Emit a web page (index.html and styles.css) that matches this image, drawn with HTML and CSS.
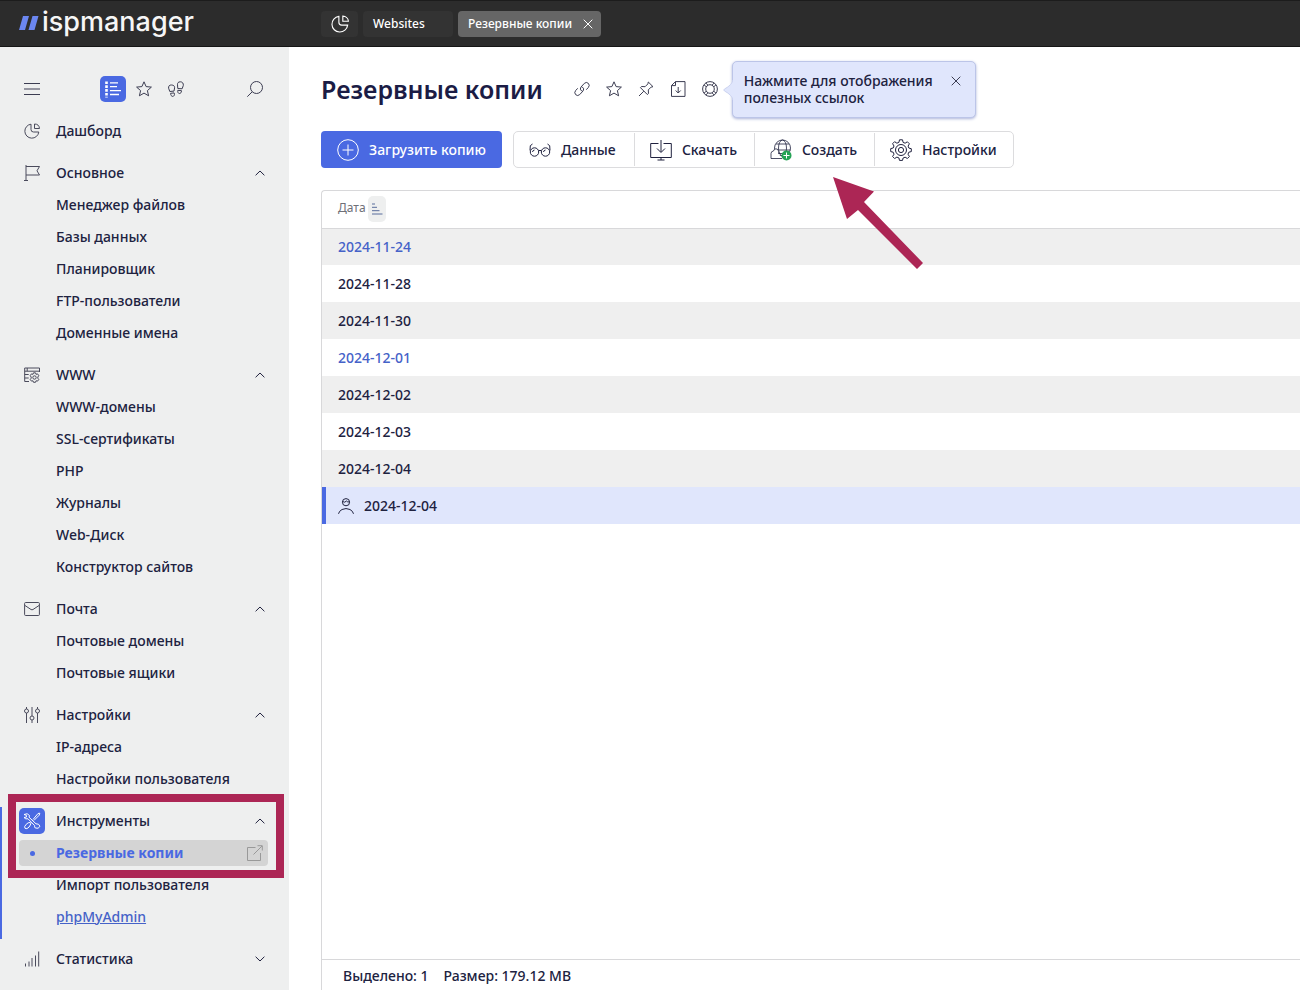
FILE: index.html
```
<!DOCTYPE html>
<html lang="ru">
<head>
<meta charset="utf-8">
<meta name="viewport" content="width=device-width, initial-scale=1">
<title>Резервные копии — ispmanager</title>
<link rel="stylesheet" href="styles.css">
</head>
<body>
<svg class="sprite" aria-hidden="true">
  <symbol id="pie" viewBox="0 0 16 16"><path d="M7 1.2A7 7 0 1 0 14.8 9H9.500Q7 9 7 6.500Z"/><path d="M10.500 1v4.500h5A5 5 0 0 0 10.500 1z"/></symbol>
  <symbol id="star" viewBox="0 0 16 16"><path d="M8 .8l2.100 4.800 5.300.5-4 3.500 1.200 5.200L8 12.100l-4.600 2.700 1.200-5.200-4-3.500 5.300-.5z"/></symbol>
  <symbol id="up" viewBox="0 0 10 6"><path d="M.6 5.300L5 1l4.400 4.300"/></symbol>
  <symbol id="down" viewBox="0 0 10 6"><path d="M.6.7L5 5 9.400.7"/></symbol>
  <symbol id="cross" viewBox="0 0 10 10"><path d="M.7.7l8.600 8.600M9.300.7L.7 9.300"/></symbol>
</svg>
<header class="topbar">
  <a class="logo" href="#" aria-label="ispmanager">
    <svg class="logo-mark" viewBox="0 0 20 14"><path d="M4 0H10L6 14H0zM13.500 0H19.500l-4 14H9.500z"/></svg>
    <span>ispmanager</span>
  </a>
  <nav class="tabs" aria-label="Вкладки">
    <button class="tab tab-icon" aria-label="Дашборд"><svg class="icon s18"><use href="#pie"/></svg></button>
    <button class="tab tab-site">Websites</button>
    <button class="tab tab-active">Резервные копии <svg class="icon s10"><use href="#cross"/></svg></button>
  </nav>
</header>
<div class="shell">
  <aside class="sidebar">
    <div class="side-tools">
      <button class="bare" aria-label="Меню"><svg class="icon s16" viewBox="0 0 16 16"><path d="M0 2.500h16M0 8h16M0 13.500h16"/></svg></button>
      <div class="side-modes">
        <button class="bare mode-on" aria-label="Список"><svg class="icon s18" viewBox="0 0 18 18"><path stroke-width="2.600" stroke-dasharray="2.600 1.200" d="M2.500 1.500v16"/><path stroke-width="1.300" d="M6 2.800h8M6 6.600h7M6 10.600h11M6 14.500h9"/></svg></button>
        <button class="bare" aria-label="Избранное"><svg class="icon s16"><use href="#star"/></svg></button>
        <button class="bare" aria-label="История"><svg class="icon s16" viewBox="0 0 16 16"><path d="M3.600 4C1.400 3.800.3 5.200.6 7.200l1.200 3.300 4.200-.4.600-3.300C6.800 5 5.400 4.100 3.600 4zM2.600 12.300l3.500-.4c1 2-.2 3.500-1.400 3.500S2.700 14.300 2.600 12.300zM12.300.8c-2.200 0-3 1.400-2.800 3l.3 3.700 4.300.3 1.200-3.300c.3-2-.8-3.700-3-3.700zM9.800 9.300l3.700.4c0 1.800-.9 2.800-2.100 2.800-1.100 0-1.900-1.200-1.600-3.200z"/></svg></button>
      </div>
      <button class="bare" aria-label="Поиск"><svg class="icon s16" viewBox="0 0 16 16"><circle cx="9.500" cy="6.500" r="6"/><path d="M5.200 10.800L.3 15.700"/></svg></button>
    </div>
    <nav class="menu" aria-label="Разделы">
      <section><a class="head" href="#"><svg class="icon s16"><use href="#pie"/></svg><span>Дашборд</span></a></section>
      <section>
        <button class="head"><svg class="icon s16" viewBox="0 0 16 16"><path d="M2 0v15.500M0 15.500h4M2 1.500h13.500L13 5.800l2.500 4.200H2"/></svg><span>Основное</span><svg class="icon chev"><use href="#up"/></svg></button>
        <a class="item" href="#">Менеджер файлов</a>
        <a class="item" href="#">Базы данных</a>
        <a class="item" href="#">Планировщик</a>
        <a class="item" href="#">FTP-пользователи</a>
        <a class="item" href="#">Доменные имена</a>
      </section>
      <section>
        <button class="head"><svg class="icon s16" viewBox="0 0 16 16"><path d="M15.500 5V1H.7v13.500H5M.7 4.200h14.800M.7 7.500h4M.7 11h4M3.200 1v3.200"/><circle cx="10.500" cy="10.500" r="1.700"/><path d="M9.500 5.800h2l.5 1.500 1.600-.4 1.200 1.800-1 1.300v1.200l1 1.200-1.200 1.700-1.600-.3-.5 1.500h-2L9 13.800l-1.600.3-1.200-1.700 1-1.200V10l-1-1.300 1.200-1.800 1.600.4z"/></svg><span>WWW</span><svg class="icon chev"><use href="#up"/></svg></button>
        <a class="item" href="#">WWW-домены</a>
        <a class="item" href="#">SSL-сертификаты</a>
        <a class="item" href="#">PHP</a>
        <a class="item" href="#">Журналы</a>
        <a class="item" href="#">Web-Диск</a>
        <a class="item" href="#">Конструктор сайтов</a>
      </section>
      <section>
        <button class="head"><svg class="icon s16" viewBox="0 0 16 16"><rect x=".6" y="1.500" width="14.800" height="13" rx="1"/><path d="M1 4.500l6 4q1 .6 2 0l6-4"/></svg><span>Почта</span><svg class="icon chev"><use href="#up"/></svg></button>
        <a class="item" href="#">Почтовые домены</a>
        <a class="item" href="#">Почтовые ящики</a>
      </section>
      <section>
        <button class="head"><svg class="icon s16" viewBox="0 0 16 16"><circle cx="2.500" cy="4" r="2"/><circle cx="8" cy="11" r="2"/><circle cx="13.500" cy="4" r="2"/><path d="M2.500 0v2M2.500 6v10M8 0v9M8 13v3M13.500 0v2M13.500 6v10"/></svg><span>Настройки</span><svg class="icon chev"><use href="#up"/></svg></button>
        <a class="item" href="#">IP-адреса</a>
        <a class="item" href="#">Настройки пользователя</a>
      </section>
      <section class="current">
        <button class="head"><span class="badge"><svg class="icon s18" viewBox="0 0 18 18"><path d="M1 2.500Q4.500.5 6.500 3.500L6 5.200l7 6.600q3-.4 4 2.500-1.500 3-4.700 1.700-1-1-.7-2.500L5 6.800Q2.500 7.500 1 5.500l2.400-.4V3.300z"/><path d="M16.800 1.200L15 1.500l-5 6M16.800 1.200l-.6 2-5.200 5.200M7.200 10.500q-2-.3-4 1.800-2.500 2.500-1.200 4 1.800 1.300 4-1.200 1.800-2.300 1.800-3.900z"/></svg></span><span>Инструменты</span><svg class="icon chev"><use href="#up"/></svg></button>
        <a class="item selected" href="#">Резервные копии <svg class="icon s16" viewBox="0 0 16 16"><path d="M8.500 2.500h-8v13h13V8M6.500 9.500L15 1M10.500.7h4.800v4.800"/></svg></a>
        <a class="item" href="#">Импорт пользователя</a>
        <a class="item link" href="#">phpMyAdmin</a>
        <div class="frame"></div>
      </section>
      <section>
        <button class="head"><svg class="icon s16" viewBox="0 0 16 16"><path d="M1.500 12.500v3M5 10.500v5M8 7v8.500M11.500 4.500v11M14.700.5v15"/></svg><span>Статистика</span><svg class="icon chev"><use href="#down"/></svg></button>
      </section>
    </nav>
  </aside>
  <main class="content">
    <div class="title-row">
      <h1>Резервные копии</h1>
      <div class="title-icons">
        <button class="bare" aria-label="Ссылка"><svg class="icon s16" viewBox="0 0 16 16"><path d="M7.800 10.200Q5.200 8.200 7 6l3.300-3.600q2-1.900 4-.1 1.900 2 .1 4.100L12.300 8.700M8.200 5.800Q10.800 7.800 9 10l-3.300 3.600q-2 1.900-4 .1-1.900-2-.1-4.100L3.700 7.300"/></svg></button>
        <button class="bare" aria-label="В избранное"><svg class="icon s16"><use href="#star"/></svg></button>
        <button class="bare" aria-label="Закрепить"><svg class="icon s16" viewBox="0 0 16 16"><path d="M10.300 1l4.700 4.700-1.900.4-2.800 2.800.2 3.600-1.200 1L2.500 6.700l1-1.200 3.600.2 2.800-2.800zM5.800 10.200L1 15"/></svg></button>
        <button class="bare" aria-label="Сохранить"><svg class="icon s16" viewBox="0 0 16 16"><path d="M5.500.6H15v14.800H1.500V4.500zM5.500.6v4h-4M8.200 6v6M5.700 9.500l2.500 2.500 2.500-2.500"/></svg></button>
        <button class="bare help" aria-label="Помощь"><svg class="icon s16" viewBox="0 0 16 16"><circle cx="8" cy="8" r="7.400"/><circle cx="8" cy="8" r="4.300"/><path d="M2 3.800l2.300 2M3.800 2L6 4.200M12.200 2L10 4.200M14 3.800l-2.200 2M2 12.200l2.300-2M3.800 14L6 11.800M12.200 14L10 11.800M14 12.200l-2.200-2"/></svg></button>
        <div class="hint" role="status">
          <svg class="hint-tip" viewBox="0 0 10 20"><path d="M10 0Q9 5 1.500 9q-1.500 1 0 2Q9 15 10 20"/></svg>
          <p>Нажмите для отображения полезных ссылок</p>
          <button class="bare" aria-label="Закрыть"><svg class="icon s10"><use href="#cross"/></svg></button>
        </div>
      </div>
    </div>
    <div class="toolbar">
      <button class="primary"><svg class="icon s22" viewBox="0 0 22 22"><circle cx="11" cy="11" r="10.300"/><path d="M11 5.500v11M5.500 11h11"/></svg>Загрузить копию</button>
      <div class="group">
        <button><svg class="icon s22" viewBox="0 0 22 22"><circle cx="5.500" cy="13" r="4.200"/><circle cx="16.500" cy="13" r="4.200"/><path d="M9.500 12q1.500-1.500 3 0M1 11.500l.3-4.800L3.500 5M21 11.500l-.3-4.800L18.500 5M3.500 13q.2-1.800 2-2M14.500 13q.2-1.800 2-2"/></svg>Данные</button>
        <button><svg class="icon s22" viewBox="0 0 22 22"><path d="M8.500 4.500H.7v14h20.600v-14h-7.800M11 1v12M7 9.500l4 4 4-4M11 18.500V21M7.500 21h7"/></svg>Скачать</button>
        <button><svg class="icon s22" viewBox="0 0 22 22"><g class="thin"><circle cx="12.500" cy="9" r="8"/><ellipse cx="12.500" cy="9" rx="4" ry="8"/><path d="M6 5h13M4.500 11h16M6 14.500h13"/><path class="cloud" d="M12 19.500H1V14.500q0-2.200 2.500-2.500Q4 9.800 6 9.800q2.500 0 2.700 3v2.200"/></g><circle class="plus" cx="16.500" cy="16.500" r="5"/><path class="plus-sign" d="M16.500 13.500v6M13.500 16.500h6"/></svg>Создать</button>
        <button><svg class="icon s22" viewBox="0 0 22 22"><path d="M9.500.8h3l.6 2.600 2 .8 2.300-1.400 2 2-1.300 2.300.8 2 2.400.6v2.900l-2.500.6-.8 2 1.400 2.300-2 2-2.300-1.300-2 .8-.6 2.400h-3l-.6-2.500-2-.8-2.300 1.400-2-2 1.400-2.300-.8-2-2.500-.6V9.600L3.200 9l.8-2-1.400-2.300 2-2L6.900 4.200l2-.8z"/><circle cx="11" cy="11" r="5.500"/><circle cx="11" cy="11" r="2.600"/></svg>Настройки</button>
      </div>
    </div>
    <div class="panel">
      <table>
        <thead><tr><th scope="col">Дата<button class="sort" aria-label="Сортировка"><svg class="icon" viewBox="0 0 12 12"><path d="M1 1h3M1 4.300h5M1 7.700h7.500M1 11h10.500"/></svg></button></th></tr></thead>
        <tbody>
          <tr><td class="full">2024-11-24</td></tr>
          <tr><td>2024-11-28</td></tr>
          <tr><td>2024-11-30</td></tr>
          <tr><td class="full">2024-12-01</td></tr>
          <tr><td>2024-12-02</td></tr>
          <tr><td>2024-12-03</td></tr>
          <tr><td>2024-12-04</td></tr>
          <tr class="chosen"><td><span class="with-icon"><svg class="icon s16" viewBox="0 0 16 16"><circle cx="8" cy="4.200" r="3.600"/><path d="M4.600 3.600q2.400 1.500 3.800-.6 1.200 1.400 3 .9M.5 15.800q.6-2.800 3.500-4.300 4-1.900 8 0 2.900 1.500 3.500 4.300"/></svg>2024-12-04</span></td></tr>
        </tbody>
      </table>
      <footer class="summary"><span>Выделено: 1</span><span>Размер: 179.12 MB</span></footer>
    </div>
    <svg class="arrow" viewBox="0 0 90 92" aria-hidden="true"><path d="M0 0L41 14.500 31 25 90 86l-6 6L25 33 14 42z"/></svg>
  </main>
</div>
</body>
</html>
```
FILE: styles.css
```
* { box-sizing: border-box; }
body {
  margin: 0;
  min-height: 100vh;
  display: flex;
  flex-direction: column;
  font: 500 14px/20px "Noto Sans", "Open Sans", sans-serif;
  color: #20223f;
  background: #fff;
}
button { font: inherit; color: inherit; background: none; border: 0; padding: 0; }
a { color: inherit; text-decoration: none; }
.sprite { position: absolute; width: 0; height: 0; }
.icon { flex: none; fill: none; stroke: currentColor; stroke-width: 1; display: block; }
.s10 { width: 10px; height: 10px; }
.s16 { width: 16px; height: 16px; }
.s18 { width: 18px; height: 18px; }
.s22 { width: 22px; height: 22px; }
.bare { display: flex; color: #3c3d52; }

.topbar {
  height: 47px;
  display: flex;
  align-items: center;
  background: #2c2c2c;
  border-top: 1px solid #1c1c1c;
  border-bottom: 1px solid #161616;
  color: #fff;
}
.logo { display: flex; align-items: center; gap: 3px; width: 321px; padding: 0 0 4px 19px; font: 500 27px/36px Inter, Lato, sans-serif; color: #f6f6f6; }
.logo-mark { width: 20px; height: 14px; margin-top: 3px; fill: #6b86f0; }
.tabs { display: flex; gap: 5px; font-size: 12px; }
.tab { display: flex; align-items: center; height: 26px; padding: 0 10px; border-radius: 4px; background: #333; }
.tab-icon { width: 37px; }
.tab-site { width: 90px; }
.tab-active { width: 143px; justify-content: space-between; padding-right: 8px; background: #666; }

.shell { flex: 1; display: flex; }
.sidebar { flex: none; width: 289px; padding-top: 26px; background: #eeefef; }
.side-tools { display: flex; align-items: center; justify-content: space-between; height: 32px; padding: 0 26px 0 24px; }
.side-modes { display: flex; align-items: center; gap: 16px; margin-left: -4px; }
.side-modes .mode-on { width: 26px; height: 26px; margin-right: -6px; border-radius: 5px; align-items: center; justify-content: center; background: #4a69e2; color: #fff; }
.menu { display: flex; flex-direction: column; gap: 10px; padding-top: 10px; }
.head { display: flex; align-items: center; width: 100%; height: 32px; padding: 0 24px; gap: 16px; text-align: left; }
.head > .icon { color: #4a4b5c; }
.head .chev { width: 10px; height: 6px; margin-left: auto; color: #20223f; }
.item { display: flex; align-items: center; height: 32px; padding-left: 56px; }
.current { position: relative; }
.current::before { content: ""; position: absolute; left: 0; top: 2px; bottom: -6px; width: 2px; background: #4a69e2; }
.badge { display: flex; align-items: center; justify-content: center; width: 26px; height: 26px; margin: 0 -5px; border-radius: 5px; background: #4a69e2; color: #fff; }
.selected { position: relative; justify-content: space-between; height: 26px; margin: 3px 21px 3px 19px; padding: 0 5px 0 37px; border-radius: 4px; background: #d4d4d4; color: #4a69e2; font-weight: 700; }
.selected::before { content: ""; position: absolute; left: 11px; top: 11px; width: 5px; height: 5px; border-radius: 50%; background: #4a69e2; }
.selected .icon { color: #999; }
.link { color: #4562c8; text-decoration: underline; }
.frame { position: absolute; left: 8px; right: 5px; top: -11px; height: 84px; border: 8px solid #ac2655; }

.content { position: relative; flex: 1; min-width: 0; display: flex; flex-direction: column; padding: 22px 0 0 32px; }
.title-row { display: flex; align-items: center; gap: 31px; height: 40px; }
h1 { margin: 0; font-size: 25px; line-height: 38px; font-weight: 600; color: #1b1c45; }
.title-icons { position: relative; display: flex; align-items: center; gap: 16px; }
.hint {
  position: absolute;
  left: 158px;
  top: -20px;
  width: 244px;
  height: 57px;
  display: flex;
  justify-content: space-between;
  align-items: flex-start;
  padding: 10px 14px 11px 11px;
  border: 1px solid #bcc5e8;
  border-radius: 5px;
  background: #e0e6fc;
  box-shadow: 0 1px 3px #aab2d8;
}
.hint p { margin: 0; font-size: 14px; line-height: 17px; }
.hint .bare { padding-top: 4px; }
.hint-tip { position: absolute; left: -10px; top: 18px; width: 10px; height: 20px; fill: #e0e6fc; stroke: #ccd3f0; }

.toolbar { display: flex; gap: 11px; margin-top: 22px; }
.toolbar button { display: flex; align-items: center; gap: 10px; padding: 0 16px; white-space: nowrap; }
.toolbar .primary { height: 37px; border-radius: 4px; background: #4a69e2; color: #fff; font-weight: 500; }
.group { display: flex; align-items: center; height: 37px; border: 1px solid #dcdcde; border-radius: 5px; }
.group button { min-width: 120px; height: 33px; padding-left: 15px; }
.group button + button { border-left: 1px solid #dcdcde; }
.thin { stroke-width: .8; }
.cloud { fill: #fff; }
.plus { fill: #25a355; stroke: none; }
.plus-sign { stroke: #fff; }

.panel { flex: 1; display: flex; flex-direction: column; margin-top: 22px; border: 1px solid #d8d8da; border-width: 1px 0 0 1px; border-top-left-radius: 4px; }
table { width: 100%; border-collapse: collapse; }
th { height: 37px; padding: 0 16px; font-size: 12px; font-weight: 400; text-align: left; color: #6f7078; border-bottom: 1px solid #d8d8da; }
.sort { display: inline-flex; vertical-align: middle; align-items: center; justify-content: center; width: 18px; height: 26px; margin-left: 2px; border-radius: 5px; background: #eeefef; color: #596d9c; }
.sort .icon { width: 12px; height: 12px; }
td { height: 37px; padding: 0 16px; }
tbody tr:nth-child(odd) { background: #efefef; }
.full { color: #4562c8; }
tbody .chosen { background: #e0e6fc; box-shadow: inset 4px 0 #4a69e2; }
.with-icon { display: flex; align-items: center; gap: 10px; }
.summary { display: flex; gap: 15px; margin-top: auto; height: 31px; padding: 6px 21px 0; border-top: 1px solid #d8d8da; }
.arrow { position: absolute; left: 544px; top: 130px; width: 90px; height: 92px; fill: #ac2655; }
```
